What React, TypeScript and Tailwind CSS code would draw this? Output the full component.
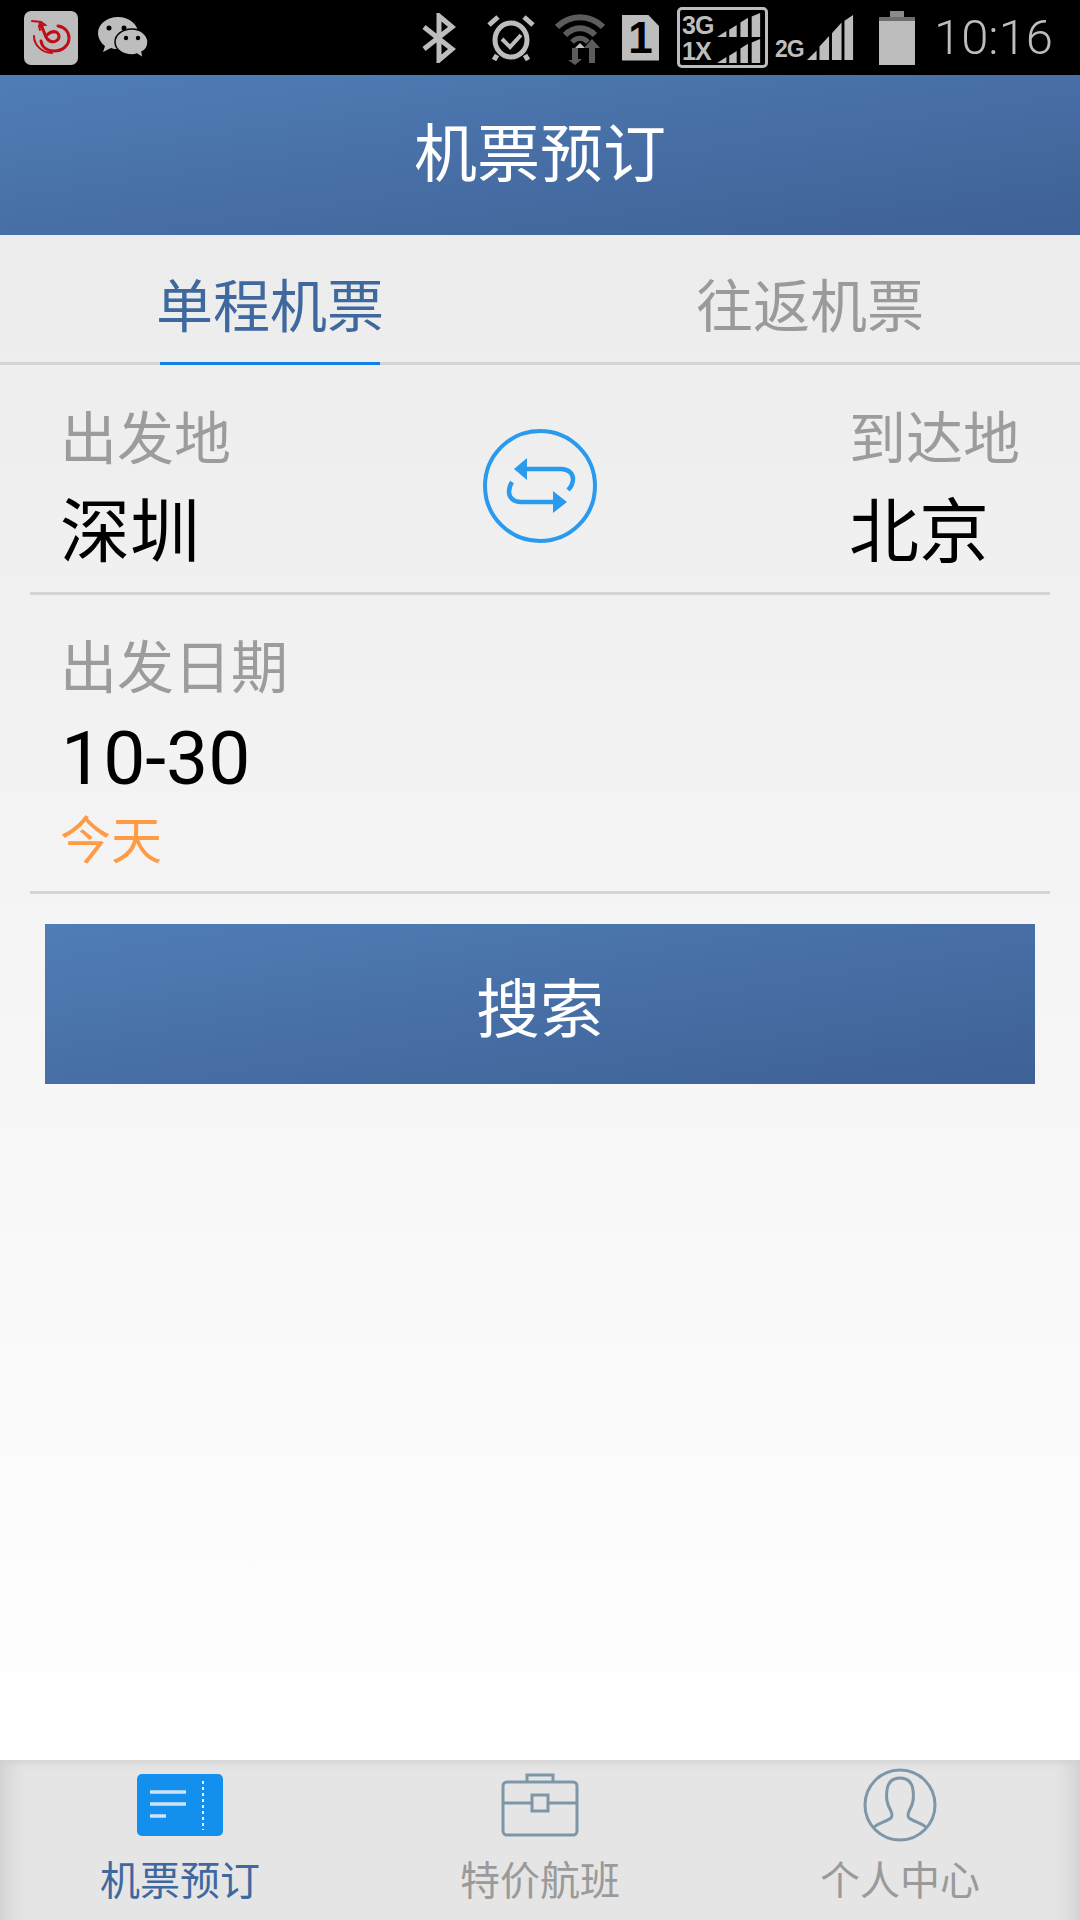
const cjk = "font-['Noto_Sans_CJK_SC','Roboto',sans-serif]"

function AppLogo() {
  return (
    <div className="w-[54px] h-[54px] rounded-[7px] bg-[#bdbdbd] flex items-center justify-center">
      <svg width="40" height="35" viewBox="0 0 40 35" fill="none" stroke="#c00d16" strokeLinecap="round">
        <path d="M27 6c7 1 11 6 11 12 0 8-7 13-15 13-7 0-12-4-13-10" strokeWidth="3" />
        <path d="M3 16c0 9 8 17 18 17" strokeWidth="2" />
        <path d="M9 4c3 4 4 9 6 13 2 4 6 6 10 4 4-2 4-7 0-9-3-1-6 0-9 3" strokeWidth="3" />
        <path d="M1 1l9 1 4 3-6 1 1 4" strokeWidth="2" />
      </svg>
    </div>
  )
}

function WeChat() {
  return (
    <svg width="50" height="42" viewBox="0 0 50 42" className="ml-[20px]">
      <path d="M20 0C9 0 0 7 0 16c0 5 3 10 7 13l-2 6 8-4c2 1 5 1 7 1 11 0 20-7 20-16S31 0 20 0z" fill="#bdbdbd" />
      <circle cx="11" cy="11" r="2.5" fill="#000" />
      <circle cx="26" cy="11" r="2.5" fill="#000" />
      <path d="M34 12c-10 0-17 6-17 13s7 13 17 13c2 0 3 0 5-1l6 4-1-6c4-2 6-6 6-10 0-7-7-13-16-13z" fill="#bdbdbd" stroke="#000" strokeWidth="1.5" />
      <circle cx="28" cy="21" r="2.2" fill="#000" />
      <circle cx="40" cy="21" r="2.2" fill="#000" />
    </svg>
  )
}

function Bluetooth() {
  return (
    <svg width="34" height="50" viewBox="0 0 34 50" fill="none" stroke="#bdbdbd" strokeWidth="5">
      <path d="M2 14l28 22-13 11V3l13 11L2 36" />
    </svg>
  )
}

function Alarm() {
  return (
    <svg width="48" height="48" viewBox="0 0 48 48" fill="none" stroke="#bdbdbd" className="ml-[31px]">
      <ellipse cx="24" cy="26" rx="16" ry="17" strokeWidth="5" />
      <path d="M2 11l9-8M46 11l-9-8" strokeWidth="5" />
      <path d="M10 41l-3 5M38 41l3 5" strokeWidth="5" />
      <path d="M15 25l8 8 11-12" strokeWidth="4" />
    </svg>
  )
}

function Wifi() {
  return (
    <svg width="50" height="54" viewBox="0 0 50 54" fill="none" className="ml-[20px]">
      <path d="M2 16C15 3 35 3 48 16" stroke="#5c5c5c" strokeWidth="6" />
      <path d="M10 24c9-9 21-9 30 0" stroke="#5c5c5c" strokeWidth="6" />
      <path d="M17 31c5-5 11-5 16 0" stroke="#5c5c5c" strokeWidth="5" />
      <path d="M25 32l-5 5h10z" fill="#bdbdbd" />
      <path d="M20 37v12h-4l7 5 0 0 7-6h-4V37z" fill="#5c5c5c" transform="translate(-3 0)" />
      <path d="M34 52V37h-5l8-9 8 9h-5v15z" fill="#5c5c5c" />
    </svg>
  )
}

function Sim() {
  return (
    <div className="ml-[17px] w-[37px] h-[46px] bg-[#bdbdbd] [clip-path:polygon(0_0,70%_0,100%_25%,100%_100%,0_100%)] flex items-center justify-center">
      <span className="text-[44px] leading-none font-bold text-black font-['Liberation_Sans',sans-serif]">1</span>
    </div>
  )
}

function Bars({ w, h }: { w: number; h: number }) {
  return (
    <svg width={w} height={h} viewBox="0 0 48 20" fill="#bdbdbd" preserveAspectRatio="none">
      <path d="M0 20L10 15v5zM13 14l8-4v10h-8zM25 8l8-4v16h-8zM37 3l9-3v20h-9z" />
    </svg>
  )
}

function Network() {
  return (
    <div className="ml-[18px] w-[91px] h-[61px] border-[3px] border-[#bdbdbd] rounded-[5px] flex flex-col justify-center pl-[2px] pr-[3px] font-['Liberation_Sans',sans-serif] font-bold text-[#bdbdbd] text-[25px] leading-[26px] tracking-[-1px]">
      <div className="flex items-center justify-between">
        <span>3G</span>
        <Bars w={45} h={24} />
      </div>
      <div className="flex items-center justify-between">
        <span>1X</span>
        <Bars w={45} h={24} />
      </div>
    </div>
  )
}

function Signal2G() {
  return (
    <div className="ml-[7px] w-[82px] h-[47px] flex items-end font-['Liberation_Sans',sans-serif] font-bold text-[#bdbdbd] text-[23px] leading-[24px] tracking-[-1px]">
      <span className="mr-[3px]">2G</span>
      <svg width="48" height="47" viewBox="0 0 50 47" fill="#bdbdbd">
        <path d="M0 47l10-10v10zM13 47V33l10-11v25zM26 47V19l10-11v39zM39 47V6l9-6v47z" />
      </svg>
    </div>
  )
}

function Battery() {
  return (
    <div className="ml-[22px] flex flex-col items-center">
      <div className="w-[14px] h-[6px] bg-[#8a8a8a]" />
      <div className="w-[36px] h-[4px] bg-[#6e6e6e]" />
      <div className="w-[36px] h-[44px] bg-[#bdbdbd]" />
    </div>
  )
}

function StatusBar() {
  return (
    <div className="h-[75px] bg-black flex items-center pl-[24px] pr-[27px]">
      <AppLogo />
      <WeChat />
      <div className="ml-auto flex items-center">
        <Bluetooth />
        <Alarm />
        <Wifi />
        <Sim />
        <Network />
        <Signal2G />
        <Battery />
        <span className="ml-[19px] text-[49px] leading-none font-light text-[#bdbdbd] font-['Roboto',sans-serif]">10:16</span>
      </div>
    </div>
  )
}

function SwapIcon() {
  return (
    <svg width="114" height="114" viewBox="0 0 114 114" fill="none" stroke="#2a9aef">
      <circle cx="57" cy="57" r="55" strokeWidth="4" />
      <path d="M44 40h34c8 0 12 5 12 10 0 4-2 8-5 11" strokeWidth="4.5" />
      <path d="M70 73H38c-8 0-12-5-12-10 0-4 1-7 3-10" strokeWidth="4.5" />
      <path d="M44 29v22L31 40z" fill="#2a9aef" stroke="none" />
      <path d="M70 62v22l14-11z" fill="#2a9aef" stroke="none" />
    </svg>
  )
}

function TicketIcon() {
  return (
    <svg width="86" height="62" viewBox="0 0 86 62">
      <rect width="86" height="62" rx="5" fill="#1390ee" />
      <path d="M13 18h36M13 30h36M13 42h16" stroke="#cfe3f5" strokeWidth="3.5" />
      <path d="M66 7v49" stroke="#e8f2fa" strokeWidth="2" strokeDasharray="3 3" />
    </svg>
  )
}

function BriefcaseIcon() {
  return (
    <svg width="78" height="64" viewBox="0 0 78 64" fill="none" stroke="#7e97a8" strokeWidth="3">
      <path d="M26 9V2h26v7" />
      <rect x="2" y="9" width="74" height="53" rx="4" />
      <path d="M2 30h29M47 30h29" />
      <rect x="31" y="22" width="16" height="16" />
    </svg>
  )
}

function PersonIcon() {
  return (
    <svg width="74" height="74" viewBox="0 0 74 74" fill="none" stroke="#7e97a8" strokeWidth="3">
      <circle cx="37" cy="37" r="35" />
      <path d="M10 60c5-5 13-6 18-10 2-2 1-5-1-9-3-5-4-12-3-19 1-8 6-12 13-12s12 4 13 12c1 7 0 14-3 19-2 4-3 7-1 9 5 4 13 5 18 10" />
    </svg>
  )
}

function Field({ label, value }: { label: string; value: string }) {
  return (
    <div>
      <div className="text-[57px] leading-[68px] text-[#9c9c9c] whitespace-nowrap">{label}</div>
      <div className="mt-[17px] text-[70px] leading-[84px] text-black whitespace-nowrap">{value}</div>
    </div>
  )
}

function BottomTab({ icon, label, active }: { icon: React.ReactNode; label: string; active?: boolean }) {
  return (
    <div className="flex-1 flex flex-col items-center">
      <div className="h-[74px] flex items-center justify-center">{icon}</div>
      <div className={`mt-[12px] text-[40px] leading-[48px] ${active ? 'text-[#3f689f]' : 'text-[#9a9a9a]'}`}>{label}</div>
    </div>
  )
}

export default function App() {
  return (
    <div className={`w-[1080px] h-[1920px] flex flex-col overflow-hidden ${cjk}`}>
      <StatusBar />
      <header className="h-[160px] flex items-center justify-center pb-[12px] bg-gradient-to-br from-[#507db6] to-[#3e6196]">
        <h1 className="text-[63px] font-normal text-white">机票预订</h1>
      </header>
      <main className="flex-1 bg-gradient-to-b from-[#ececec] to-white">
        <div className="h-[130px] flex border-b-[3px] border-[#d4d4d4]">
          <div className="w-[540px] flex justify-center">
            <div className="w-[220px] flex flex-col items-center justify-center pt-[8px] border-b-[3px] border-[#0f7fe6] -mb-[3px]">
              <span className="text-[57px] leading-none whitespace-nowrap text-[#3f689f]">单程机票</span>
            </div>
          </div>
          <div className="w-[540px] flex items-center justify-center pt-[8px] text-[57px] leading-none text-[#9a9a9a]">
            往返机票
          </div>
        </div>
        <div className="mx-[30px] h-[230px] border-b-[3px] border-[#d4d4d4] flex items-start justify-between px-[30px] pt-[35px]">
          <Field label="出发地" value="深圳" />
          <div className="mt-[29px]">
            <SwapIcon />
          </div>
          <div className="w-[171px]">
            <Field label="到达地" value="北京" />
          </div>
        </div>
        <div className="mx-[30px] h-[299px] border-b-[3px] border-[#d4d4d4] pl-[30px] pt-[16px]">
          <div className="text-[57px] leading-[105px] text-[#9c9c9c]">出发日期</div>
          <div className="pl-[1px] text-[75px] leading-[84px] text-black font-['Roboto',sans-serif]">10-30</div>
          <div className="text-[51px] leading-[74px] text-[#ff9a45]">今天</div>
        </div>
        <button className="block mx-auto mt-[30px] w-[990px] h-[160px] bg-gradient-to-br from-[#507db6] to-[#3e6196] text-[64px] text-white">
          搜索
        </button>
      </main>
      <nav className="h-[160px] flex pt-[8px] bg-[#e5e5e5] shadow-[inset_0_6px_8px_-4px_#cfcfcf,inset_28px_0_20px_-20px_#cfcfcf,inset_-28px_0_20px_-20px_#cfcfcf]">
        <BottomTab icon={<TicketIcon />} label="机票预订" active />
        <BottomTab icon={<BriefcaseIcon />} label="特价航班" />
        <BottomTab icon={<PersonIcon />} label="个人中心" />
      </nav>
    </div>
  )
}
